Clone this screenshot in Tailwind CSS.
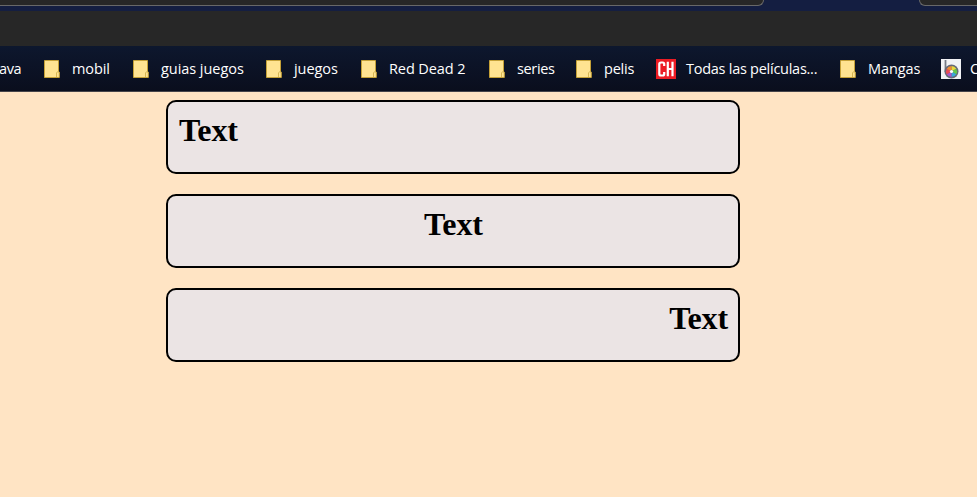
<!DOCTYPE html>
<html lang="es"><head><meta charset="utf-8"><title>Text</title>
<script src="https://cdn.jsdelivr.net/npm/@tailwindcss/browser@4"></script></head>
<body class="w-[977px] h-[497px] overflow-hidden bg-[#ffe4c4]">
<svg class="hidden"><defs>
<g id="folder"><path d="M.5.5h14v11.500h.8v5.500H.5z" fill="#ffe391" stroke="#c5a137"/><path d="M12.500 17v-4l1-1.300h1.500" fill="none" stroke="#d6b654"/></g>
<pattern id="grid" width="25" height="25" patternUnits="userSpaceOnUse"><path d="M3.500 0v25M12.500 0v25M20.500 0v25M0 5.500h25M0 14.500h25" stroke="#43619a" stroke-opacity=".13"/></pattern>
</defs></svg>
<header class="h-[92px] flex flex-col">
  <div class="h-[11px] bg-[#141e41] flex justify-between items-start overflow-hidden">
    <div class="w-[764px] h-[6px] bg-[#272727] border-b border-r border-[#686868] rounded-br-[10px]"></div>
    <div class="w-[58px] h-[6px] bg-[#272727] border-b border-l border-[#686868] rounded-bl-[10px]"></div>
  </div>
  <div class="h-[35px] bg-[#272727]"></div>
  <nav class="relative h-[46px] bg-linear-to-b from-[#0d172e] to-[#0a0e1d] border-b border-[#45444a] text-white text-[14.5px] leading-[20px] font-['Open_Sans','Noto_Sans',sans-serif] whitespace-nowrap overflow-hidden">
    <svg class="absolute inset-0 w-full h-full"><rect width="977" height="46" fill="url(#grid)"/></svg>
    <div class="relative flex items-center h-[45px]">
      <span class="w-[44px] shrink-0 -ml-px mr-px tracking-[-0.4px]">ava</span>
      <a class="w-[89px] shrink-0 flex items-center"><svg class="w-[16px] h-[18px] mr-[12px]"><use href="#folder"/></svg><span class="tracking-[-0.1px]">mobil</span></a>
      <a class="w-[133px] shrink-0 flex items-center"><svg class="w-[16px] h-[18px] mr-[12px]"><use href="#folder"/></svg><span class="tracking-[-0.05px]">guias juegos</span></a>
      <a class="w-[95px] shrink-0 flex items-center"><svg class="w-[16px] h-[18px] mr-[12px]"><use href="#folder"/></svg><span class="tracking-[-0.05px]">juegos</span></a>
      <a class="w-[128px] shrink-0 flex items-center"><svg class="w-[16px] h-[18px] mr-[12px]"><use href="#folder"/></svg><span class="tracking-[-0.1px]">Red Dead 2</span></a>
      <a class="w-[87px] shrink-0 flex items-center"><svg class="w-[16px] h-[18px] mr-[12px]"><use href="#folder"/></svg><span class="tracking-[-0.35px]">series</span></a>
      <a class="w-[80px] shrink-0 flex items-center"><svg class="w-[16px] h-[18px] mr-[12px]"><use href="#folder"/></svg><span class="tracking-[-0.2px]">pelis</span></a>
      <a class="w-[184px] shrink-0 flex items-center"><svg class="w-[20px] h-[20px] mr-[10px]" viewBox="0 0 20 20"><path d="M0 0h20v20H0z" fill="#ec1c24"/><path d="M8.200 7V5q0-1.500-1.500-1.500H5Q3.300 3.500 3.300 5v10q0 1.500 1.700 1.500h1.700q1.500 0 1.500-1.500v-2M11.800 2.800v14.400M16.500 2.800v14.400M11.800 10h5" fill="none" stroke="#fff" stroke-width="2.200"/></svg><span class="tracking-[-0.26px]">Todas las películas...</span></a>
      <a class="w-[101px] shrink-0 flex items-center"><svg class="w-[16px] h-[18px] mr-[12px]"><use href="#folder"/></svg><span class="tracking-[-0.1px]">Mangas</span></a>
      <a class="shrink-0 flex items-center"><svg class="w-[20px] h-[20px] mr-[9px]" viewBox="0 0 20 20"><path d="M0 0h20v20H0z" fill="#f1f2f5"/><path d="M4.500 1v12" stroke="#777b86" stroke-width="1.800"/><circle cx="10.500" cy="12.500" r="7" fill="#666a78"/><g fill="none" stroke-width="4"><path d="M10.500 9a3.500 3.500 0 0 1 3.030 1.750" stroke="#e7d83a"/><path d="M13.530 10.750a3.500 3.500 0 0 1 0 3.500" stroke="#63c94b"/><path d="M13.530 14.250a3.500 3.500 0 0 1-3.030 1.750" stroke="#38a8d8"/><path d="M10.500 16a3.500 3.500 0 0 1-3.030-1.750" stroke="#a956c9"/><path d="M7.470 14.250a3.500 3.500 0 0 1 0-3.500" stroke="#eb4a55"/><path d="M7.470 10.750A3.500 3.500 0 0 1 10.500 9" stroke="#f18a32"/></g><circle cx="10.500" cy="12.500" r="1.600" fill="#fff"/></svg><span>C</span></a>
    </div>
  </nav>
</header>
<main class="ml-[166px] w-[574px] pt-2 flex flex-col gap-5 font-['Liberation_Serif',serif] text-[32px] leading-[37px] font-bold text-black tracking-[-0.1px]">
  <h1 class="h-[74px] border-2 border-black rounded-[10px] bg-[#ebe4e4] pl-[11px] pr-[10px] pt-[10px] text-left">Text</h1>
  <h1 class="h-[74px] border-2 border-black rounded-[10px] bg-[#ebe4e4] pl-[11px] pr-[10px] pt-[10px] text-center">Text</h1>
  <h1 class="h-[74px] border-2 border-black rounded-[10px] bg-[#ebe4e4] pl-[11px] pr-[10px] pt-[10px] text-right">Text</h1>
</main>
</body></html>
